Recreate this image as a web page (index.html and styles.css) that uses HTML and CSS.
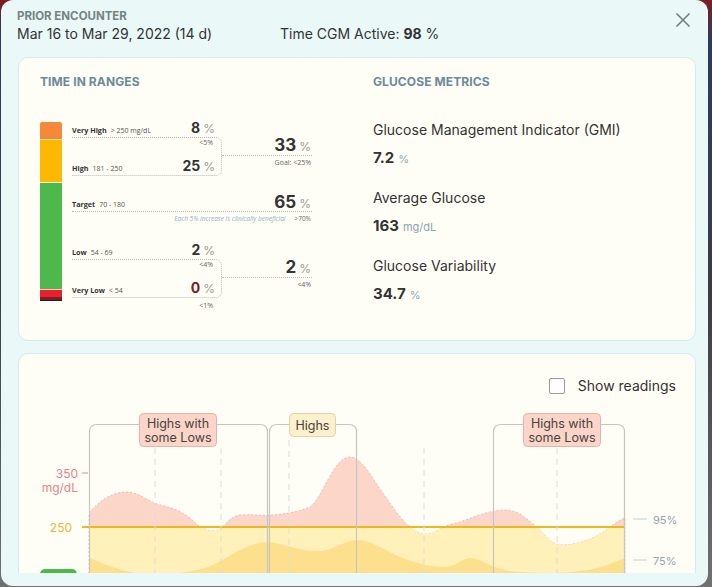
FILE: index.html
```html
<!DOCTYPE html>
<html lang="en">
<head>
<meta charset="utf-8">
<title>Prior Encounter</title>
<link rel="stylesheet" href="styles.css">
</head>
<body>
<div class="modal">
  <header class="modal-head">
    <div class="head-text">
      <div class="eyebrow">PRIOR ENCOUNTER</div>
      <div class="head-info">
        <span class="dates">Mar 16 to Mar 29, 2022 (14 d)</span>
        <span class="active">Time CGM Active: <b>98</b> %</span>
      </div>
    </div>
    <button class="close" aria-label="Close">
      <svg width="14" height="14" viewBox="0 0 14 14"><path d="M1 1 L13 13 M13 1 L1 13" stroke="#7a7f80" stroke-width="1.7" stroke-linecap="round"/></svg>
    </button>
  </header>

  <div class="modal-body">
    <section class="card summary">
      <div class="tir-col">
        <h2 class="card-title">TIME IN RANGES</h2>
        <div class="tir">
          <div class="tir-bar">
            <span class="seg seg-vh"></span>
            <span class="seg seg-h"></span>
            <span class="seg seg-t"></span>
            <span class="seg seg-l"></span>
            <span class="seg seg-vl"></span>
          </div>
          <div class="tir-body">
            <div class="group">
              <div class="group-left">
                <div class="range-row">
                  <span class="range-name"><b>Very High</b>&gt; 250 mg/dL</span>
                  <span class="pct">8<small>%</small></span>
                </div>
                <div class="bracket">
                  <div class="lim">&lt;5%</div>
                  <div class="range-row">
                    <span class="range-name"><b>High</b>181 - 250</span>
                    <span class="pct">25<small>%</small></span>
                  </div>
                </div>
              </div>
              <div class="group-right">
                <div class="sum"><span class="pct big">33<small>%</small></span></div>
                <div class="goal">Goal: &lt;25%</div>
              </div>
            </div>

            <div class="target">
              <div class="target-row">
                <span class="range-name"><b>Target</b>70 - 180</span>
                <span class="pct big">65<small>%</small></span>
              </div>
              <div class="note"><i>Each 5% increase is clinically beneficial</i><span>&gt;70%</span></div>
            </div>

            <div class="group group-low">
              <div class="group-left">
                <div class="range-row">
                  <span class="range-name"><b>Low</b>54 - 69</span>
                  <span class="pct">2<small>%</small></span>
                </div>
                <div class="bracket">
                  <div class="lim">&lt;4%</div>
                  <div class="range-row">
                    <span class="range-name"><b>Very Low</b>&lt; 54</span>
                    <span class="pct"><em class="zero">0</em><small>%</small></span>
                  </div>
                </div>
                <div class="lim lim-after">&lt;1%</div>
              </div>
              <div class="group-right">
                <div class="sum"><span class="pct big">2<small>%</small></span></div>
                <div class="goal">&lt;4%</div>
              </div>
            </div>
          </div>
        </div>
      </div>

      <div class="metrics">
        <h2 class="card-title">GLUCOSE METRICS</h2>
        <dl class="metric-list">
          <div class="metric">
            <dt>Glucose Management Indicator (GMI)</dt>
            <dd>7.2<small>%</small></dd>
          </div>
          <div class="metric">
            <dt>Average Glucose</dt>
            <dd>163<small>mg/dL</small></dd>
          </div>
          <div class="metric">
            <dt>Glucose Variability</dt>
            <dd>34.7<small>%</small></dd>
          </div>
        </dl>
      </div>
    </section>

    <section class="card chart-card">
      <div class="readings-row">
        <label class="toggle"><span class="checkbox"></span><span>Show readings</span></label>
      </div>
      <svg class="agp" width="675" height="200" viewBox="19 405 675 200">
        <defs>
          <clipPath id="curveArea">
            <path d="M89,513 C100,500 112,492 127,492 C140,492 148,502 160,505 C170,507 180,510 190,518 C198,525 203,531 214,531 C224,531 226,517 240,515 C252,514 262,516 272,515 C285,514 298,512 310,507 C322,500 333,457 350,457 C362,457 372,478 385,496 C395,510 410,534 425,534 C436,534 440,527 452,524 C470,520 485,510 505,510 C520,510 528,520 540,530 C548,538 552,545 562,545 C575,545 590,540 600,534 C610,528 616,521 625,518 L625,620 L89,620 Z"/>
          </clipPath>
        </defs>
        <path class="area-hi" d="M89,513 C100,500 112,492 127,492 C140,492 148,502 160,505 C170,507 180,510 190,518 C198,525 203,531 214,531 C224,531 226,517 240,515 C252,514 262,516 272,515 C285,514 298,512 310,507 C322,500 333,457 350,457 C362,457 372,478 385,496 C395,510 410,534 425,534 C436,534 440,527 452,524 C470,520 485,510 505,510 C520,510 528,520 540,530 C548,538 552,545 562,545 C575,545 590,540 600,534 C610,528 616,521 625,518 L625,620 L89,620 Z"/>
        <rect class="area-mid" x="89" y="527" width="536" height="100" clip-path="url(#curveArea)"/>
        <path class="area-low" d="M89,558 C100,562 118,570 135,573 C150,576 185,574 205,568 C222,563 245,542 268,542 C280,542 295,551 320,551 C332,551 345,540 357,540 C370,540 385,550 400,557 C415,563 432,567 445,567 C455,567 462,558 470,558 C480,558 490,568 510,571 C530,573 560,574 580,571 C600,569 612,563 625,558 L625,620 L89,620 Z"/>
        <line class="line-250" x1="82" y1="527" x2="625" y2="527"/>

        <g class="grid">
          <line x1="155" y1="448" x2="155" y2="610"/>
          <line x1="221" y1="448" x2="221" y2="610"/>
          <line x1="289" y1="440" x2="289" y2="610"/>
          <line x1="424" y1="448" x2="424" y2="610"/>
          <line x1="557" y1="448" x2="557" y2="610"/>
        </g>

        <g class="boxes">
          <path d="M89.5,610 V432 Q89.5,424.5 97,424.5 H260 Q267.5,424.5 267.5,432 V610"/>
          <path d="M269.5,610 V432 Q269.5,424.5 277,424.5 H349 Q356.5,424.5 356.5,432 V610"/>
          <path d="M493.5,610 V432 Q493.5,424.5 501,424.5 H617 Q624.5,424.5 624.5,432 V610"/>
        </g>

        <g class="tags">
          <rect class="tag-hl" x="139.5" y="413.5" width="77" height="33" rx="4"/>
          <text x="178" y="427.5">Highs with</text>
          <text x="178" y="441.5">some Lows</text>
          <rect class="tag-h" x="289.5" y="413.5" width="46" height="23" rx="4"/>
          <text x="312.5" y="429.5">Highs</text>
          <rect class="tag-hl" x="523.5" y="413.5" width="77" height="33" rx="4"/>
          <text x="562" y="427.5">Highs with</text>
          <text x="562" y="441.5">some Lows</text>
        </g>

        <g class="axis">
          <text class="ax-pink" x="78" y="477.5">350</text>
          <line class="tick-pink" x1="82" y1="473" x2="88" y2="473"/>
          <text class="ax-pink" x="78" y="492">mg/dL</text>
          <text class="ax-yellow" x="72" y="532">250</text>
          <line class="tick-blue" x1="633" y1="519" x2="647" y2="519"/>
          <text class="ax-blue" x="653" y="523.5">95%</text>
          <line class="tick-blue" x1="633" y1="560" x2="647" y2="560"/>
          <text class="ax-blue" x="653" y="564.5">75%</text>
          <rect class="badge" x="40" y="569" width="37" height="16" rx="5"/>
          <text class="badge-text" x="58.5" y="581">180</text>
        </g>
      </svg>
    </section>
  </div>
</div>
</body>
</html>
```

FILE: styles.css
```css
* { box-sizing: border-box; margin: 0; padding: 0; }

html, body { width: 712px; height: 587px; overflow: hidden; }

body {
  background: linear-gradient(180deg, #7d1c22 0, #2b3b5f 40px, #3a3d42 300px, #6f7270 587px);
  font-family: Inter, "Noto Sans", sans-serif;
  color: #333;
}

.modal {
  margin-left: 1px;
  width: 707px;
  height: 586px;
  background: #eaf8f7;
  border-radius: 12px;
  display: flex;
  flex-direction: column;
  overflow: hidden;
}

/* header */
.modal-head {
  height: 57px;
  flex-shrink: 0;
  display: flex;
  justify-content: space-between;
  align-items: flex-start;
  padding: 8px 18px 0 16px;
}
.eyebrow {
  font-size: 11.5px;
  font-weight: 700;
  line-height: 16px;
  color: #778383;
}
.head-info {
  display: flex;
  font-size: 14px;
  line-height: 20px;
  color: #333;
}
.dates { width: 263px; }
.active b { font-weight: 700; }
.close {
  border: 0;
  background: none;
  width: 14px;
  height: 14px;
  margin-top: 5px;
  display: flex;
}

/* body */
.modal-body {
  flex: 1;
  margin: 0 12px 13px 17px;
  overflow: hidden;
  display: flex;
  flex-direction: column;
  gap: 12px;
}
.card {
  flex-shrink: 0;
  background: #fffef6;
  border: 1px solid #d3eaee;
  border-radius: 10px;
}

/* summary card */
.summary {
  height: 284px;
  display: grid;
  grid-template-columns: 333px 1fr;
  padding: 16px 0 0 21px;
}
.card-title {
  font-size: 12px;
  font-weight: 700;
  line-height: 16px;
  color: #6b8b97;
  letter-spacing: 0.1px;
}

.tir { display: flex; margin-top: 30px; }
.tir-bar {
  width: 22px;
  margin-top: 2px;
  display: flex;
  flex-direction: column;
}
.seg { display: block; width: 100%; }
.seg-vh { height: 17px; background: #f6883a; border-radius: 2px 2px 0 0; }
.seg-h { height: 43px; background: #ffb800; border-top: 1px solid #fbe7a6; }
.seg-t { height: 107px; background: #4db84b; border-top: 1px solid #e9f2c9; }
.seg-l { height: 8px; background: #e8202a; border-top: 1px solid #f3c9c3; }
.seg-vl { height: 4px; background: #7a1d28; border-bottom: 1px solid #2a1a1a; }

.tir-body { margin-left: 10px; width: 240px; }

.group { display: flex; }
.group-left { width: 150px; }
.group-right { width: 90px; margin-top: 17px; }

.range-row {
  height: 17px;
  display: flex;
  justify-content: space-between;
  align-items: center;
  padding-right: 7px;
}
.bracket .range-row { padding-right: 6px; }

.range-name {
  font-family: "Open Sans", "Noto Sans", sans-serif;
  font-size: 7px;
  color: #555;
  padding-top: 2px;
}
.range-name b {
  font-weight: 700;
  color: #333;
  margin-right: 4px;
  font-size: 7.2px;
}

.pct {
  font-size: 14px;
  font-weight: 700;
  line-height: 16px;
  color: #333;
}
.pct small {
  font-size: 12px;
  font-weight: 400;
  color: #9a9a9a;
  margin-left: 3px;
}
.pct.big { font-size: 17px; }
.pct.big small { font-size: 12px; }
.zero { font-style: normal; color: #7a1d28; }

.bracket {
  height: 39px;
  border: 1px dotted #b9b9b9;
  border-left: 0;
  border-radius: 0 6px 6px 0;
  display: flex;
  flex-direction: column;
  justify-content: space-between;
}
.lim {
  font-family: "Open Sans", "Noto Sans", sans-serif;
  font-size: 7px;
  line-height: 10px;
  text-align: right;
  padding-right: 8px;
  color: #666;
}
.lim-after { line-height: 12px; margin-top: 2px; padding-right: 9px; }

.sum {
  height: 19px;
  border-bottom: 1px dotted #b9b9b9;
  display: flex;
  justify-content: flex-end;
  align-items: flex-start;
  padding-right: 1px;
}
.goal {
  font-family: "Open Sans", "Noto Sans", sans-serif;
  font-size: 7px;
  line-height: 14px;
  text-align: right;
  padding-right: 1px;
  color: #666;
}

.target { margin-top: 19px; }
.target-row {
  height: 17px;
  border-bottom: 1px dotted #b9b9b9;
  display: flex;
  justify-content: space-between;
  align-items: center;
  padding-right: 1px;
}
.note {
  display: flex;
  justify-content: flex-end;
  gap: 9px;
  font-family: "Open Sans", "Noto Sans", sans-serif;
  font-size: 6.5px;
  line-height: 14px;
  color: #666;
  padding-right: 1px;
}
.note i { color: #8fb2c4; }

.group-low { margin-top: 16px; }

/* metrics */
.metric-list {
  margin-top: 30px;
  display: flex;
  flex-direction: column;
  gap: 19px;
}
.metric dt {
  font-size: 14px;
  line-height: 20px;
  color: #333;
}
.metric dd {
  margin-top: 8px;
  font-size: 15px;
  font-weight: 700;
  line-height: 20px;
  color: #333;
}
.metric dd small {
  font-size: 11px;
  font-weight: 400;
  color: #8aa7b3;
  margin-left: 4px;
}

/* chart card */
.readings-row {
  display: flex;
  justify-content: flex-end;
  padding: 24px 19px 11px;
}
.toggle {
  display: flex;
  align-items: center;
  gap: 13px;
  font-size: 14px;
  line-height: 16px;
  color: #333;
}
.checkbox {
  width: 16px;
  height: 16px;
  border: 1px solid #9a9a9a;
  border-radius: 2px;
  background: #fff;
}

.agp { display: block; }
.area-hi { fill: #fcd6c9; stroke: #dcaab2; stroke-width: 0.7; stroke-dasharray: 2 2; }
.area-mid { fill: #fff1b9; }
.area-low { fill: #fde08e; }
.line-250 { stroke: #f0b718; stroke-width: 2; }
.grid line { stroke: #dedcd4; stroke-width: 1; stroke-dasharray: 6 5; }
.boxes path { fill: none; stroke: #c6c6bf; stroke-width: 1.2; }
.tag-hl { fill: #fcd5c8; stroke: #e3b5a8; }
.tag-h { fill: #fdf0cc; stroke: #e1d3a4; }
.tags text {
  font-family: Inter, "Noto Sans", sans-serif;
  font-size: 12.5px;
  fill: #444;
  text-anchor: middle;
}
.axis text { font-family: Inter, "Noto Sans", sans-serif; font-size: 12px; }
.ax-pink { fill: #e8818f; text-anchor: end; }
.ax-yellow { fill: #eab633; text-anchor: end; }
.axis .ax-blue { fill: #8fa5b0; font-size: 11px; }
.tick-pink { stroke: #e8818f; stroke-width: 1; }
.tick-blue { stroke: #bcd3de; stroke-width: 1; }
.badge { fill: #4db84b; }
.axis .badge-text { fill: #fff; font-size: 10px; font-weight: 700; text-anchor: middle; }
```
